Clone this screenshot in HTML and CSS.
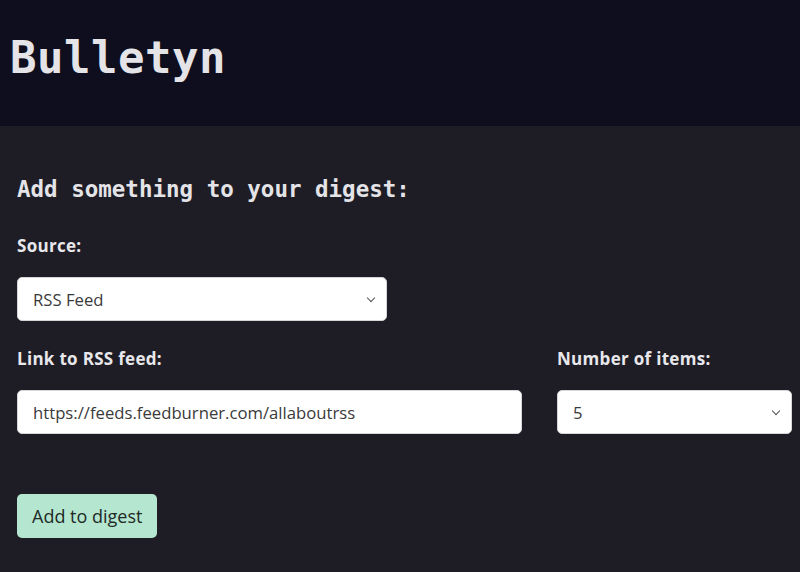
FILE: index.html
```html
<!DOCTYPE html>
<html lang="en">
<head>
    <meta charset="UTF-8">
    <meta name="viewport" content="width=device-width, initial-scale=1.0">
    <title>Bulletyn</title>
    <link rel="stylesheet" href="styles.css">
</head>
<body>
    <!-- Header Section -->
    <header class="site-header">
        <h1 class="brand">Bulletyn</h1>
    </header>

    <main class="content">
        <h2 class="section-title">Add something to your digest:</h2>
        <form id="digestForm" class="digest-form">
            <!-- Source -->
            <div class="form-group source-group">
                <label for="source">Source:</label>
                <div class="select-wrap">
                    <select id="source" name="source">
                        <option>RSS Feed</option>
                    </select>
                </div>
            </div>

            <div class="form-row">
                <!-- Feed link -->
                <div class="form-group">
                    <label for="feedLink">Link to RSS feed:</label>
                    <input type="text" id="feedLink" name="feedLink" value="https://feeds.feedburner.com/allaboutrss">
                </div>

                <!-- Item count -->
                <div class="form-group">
                    <label for="itemCount">Number of items:</label>
                    <div class="select-wrap">
                        <select id="itemCount" name="itemCount">
                            <option>5</option>
                        </select>
                    </div>
                </div>
            </div>

            <button type="submit" class="btn-add">Add to digest</button>
        </form>
    </main>
</body>
</html>
```

FILE: styles.css
```css
body {
    margin: 0;
    font-family: "Open Sans", "Noto Sans", Arial, sans-serif;
    background: #1e1d25;
    color: #e6e6e6;
}

/* Header Section */
.site-header {
    background: #0e0e1e;
    height: 126px;
    display: flex;
    align-items: center;
    padding: 0 10px 12px;
    box-sizing: border-box;
}

.brand {
    margin: 0;
    font-family: "DejaVu Sans Mono", "Liberation Mono", monospace;
    font-weight: bold;
    font-size: 44px;
    color: #e4e4e8;
    letter-spacing: 0.5px;
}

.content {
    padding: 50px 17px 0;
}

.section-title {
    margin: 0 0 32px;
    font-family: "DejaVu Sans Mono", "Liberation Mono", monospace;
    font-weight: bold;
    font-size: 22.5px;
    color: #e4e4e8;
}

.form-group label {
    display: block;
    font-weight: bold;
    font-size: 17px;
    letter-spacing: 0.3px;
    margin-bottom: 20px;
    color: #e8e8ec;
}

.source-group {
    width: 370px;
    margin-bottom: 26px;
}

.form-row {
    display: grid;
    grid-template-columns: 505px 235px;
    column-gap: 35px;
    margin-bottom: 60px;
}

input[type="text"],
select {
    width: 100%;
    height: 44px;
    padding: 0 15px;
    border: 1px solid #d6d6d6;
    border-radius: 5px;
    box-sizing: border-box;
    background: #fff;
    color: #3a3a3a;
    font-family: inherit;
    font-size: 16.7px;
    outline: none;
    appearance: none;
}

.select-wrap {
    position: relative;
}

.select-wrap::after {
    content: "";
    position: absolute;
    right: 13px;
    top: 18px;
    width: 5px;
    height: 5px;
    border-right: 1.5px solid #555;
    border-bottom: 1.5px solid #555;
    transform: rotate(45deg);
    pointer-events: none;
}

.btn-add {
    padding: 0 15px;
    height: 44px;
    background: #b4e6d0;
    color: #1f2a26;
    border: none;
    border-radius: 5px;
    font-family: inherit;
    font-size: 18px;
    cursor: pointer;
}
```
